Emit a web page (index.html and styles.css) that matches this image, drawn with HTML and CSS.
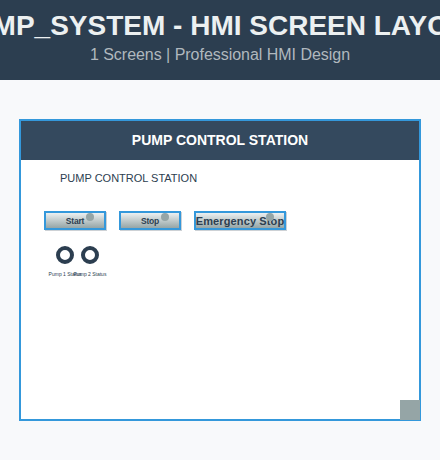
FILE: index.html
```
<!DOCTYPE html>
<html lang="en">
<head>
<meta charset="utf-8">
<title>PUMP_SYSTEM - HMI Screen Layout</title>
<link rel="stylesheet" href="styles.css">
</head>
<body>
<header class="banner">
  <h1 class="banner-title">PUMP_SYSTEM - HMI SCREEN LAYOUT</h1>
  <p class="banner-sub">1 Screens | Professional HMI Design</p>
</header>
<main class="screen">
  <h2 class="screen-title">PUMP CONTROL STATION</h2>
  <p class="screen-label">PUMP CONTROL STATION</p>
  <div class="controls">
    <div class="button"><span class="button-text">Start</span><i class="dot"></i></div>
    <div class="button"><span class="button-text">Stop</span><i class="dot"></i></div>
    <div class="button wide"><span class="button-text">Emergency Stop</span><i class="dot"></i></div>
  </div>
  <div class="lamps">
    <div class="lamp"><i class="ring"></i><span class="lamp-text">Pump 1 Status</span></div>
    <div class="lamp"><i class="ring"></i><span class="lamp-text">Pump 2 Status</span></div>
  </div>
  <i class="corner"></i>
</main>
</body>
</html>
```
FILE: styles.css
```
* { box-sizing: border-box; }
body {
  margin: 0;
  height: 460px;
  overflow: hidden;
  background: #f8f9fb;
  font-family: "Liberation Sans", Arial, sans-serif;
  color: #2c3e50;
}
h1, h2, p { margin: 0; font-weight: normal; white-space: nowrap; }
.banner {
  height: 80px;
  padding-top: 10px;
  display: flex;
  flex-direction: column;
  align-items: center;
  overflow: hidden;
  background: #2c3e50;
}
.banner-title { font-size: 28px; line-height: 32px; font-weight: bold; color: #ecf0f1; }
.banner-sub { margin-top: 4px; font-size: 16px; line-height: 18px; letter-spacing: -0.03px; color: #b0b8be; }
.screen {
  position: relative;
  width: 402px;
  height: 302px;
  margin: 39px 0 0 19px;
  border: 2px solid #3498db;
  background: #fff;
}
.screen-title {
  height: 39px;
  line-height: 38px;
  text-align: center;
  font-size: 14px;
  font-weight: bold;
  color: #fff;
  background: #34495e;
}
.screen-label { margin: 11px 0 0 39px; font-size: 11px; line-height: 14px; }
.controls { display: flex; gap: 13px; margin: 26px 0 0 23px; }
.button {
  position: relative;
  display: flex;
  justify-content: center;
  align-items: center;
  width: 62px;
  height: 19px;
  border: 2px solid #3498db;
  background: linear-gradient(#ecf0f1, #95a5a6);
  box-shadow: 1px 1px 0 #cdd1d5;
  font-size: 8.5px;
  font-weight: bold;
  letter-spacing: -0.2px;
  line-height: 15px;
  white-space: nowrap;
}
.button-text { padding-top: 2px; }
.wide { width: 92px; font-size: 11px; letter-spacing: 0.12px; }
.wide .button-text { padding-top: 1px; }
.dot {
  position: absolute;
  top: 0;
  right: 10px;
  width: 8px;
  height: 8px;
  border-radius: 50%;
  background: #95a5a6;
}
.lamps { display: flex; gap: 7px; margin: 16px 0 0 35px; }
.lamp { display: flex; flex-direction: column; align-items: center; width: 18px; }
.ring { width: 18px; height: 18px; border: 4px solid #2c3e50; border-radius: 50%; background: #fff; }
.lamp-text { margin-top: 7px; font-size: 5px; line-height: 6px; white-space: nowrap; }
.corner { position: absolute; right: -1px; bottom: -1px; width: 20px; height: 20px; background: #95a5a6; }
```
